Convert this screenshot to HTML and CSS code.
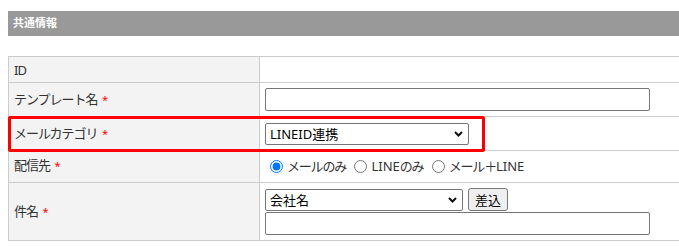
FILE: index.html
```html
<!DOCTYPE html>
<html>
<head>
    <meta charset="utf-8">
    <title>共通情報</title>
<link rel="stylesheet" href="styles.css">
</head>
<body>
    <div class="page">
        <h2 class="section-title">共通情報</h2>

        <div class="form-wrap">
            <table class="form-table">
                <tr class="row-id">
                    <th>ID</th>
                    <td></td>
                </tr>
                <tr class="row-template">
                    <th>テンプレート名 <span class="req">*</span></th>
                    <td><input type="text" class="text-wide"></td>
                </tr>
                <tr class="row-category">
                    <th>メールカテゴリ <span class="req">*</span></th>
                    <td>
                        <span class="select-box cat-select">
                            <select>
                                <option>LINEID連携</option>
                            </select>
                            <svg class="chevron" width="9" height="6" viewBox="0 0 9 6"><path d="M1 1 L4.5 4.5 L8 1" fill="none" stroke="#111" stroke-width="2"/></svg>
                        </span>
                    </td>
                </tr>
                <tr class="row-dest">
                    <th>配信先 <span class="req">*</span></th>
                    <td>
                        <label class="radio"><input type="radio" name="dest" checked><span class="jp">メールのみ</span></label>
                        <label class="radio"><input type="radio" name="dest">LINE<span class="jp">のみ</span></label>
                        <label class="radio"><input type="radio" name="dest"><span class="jp">メール＋</span>LINE</label>
                    </td>
                </tr>
                <tr class="row-subject">
                    <th>件名 <span class="req">*</span></th>
                    <td>
                        <div class="insert-line">
                            <span class="select-box field-select">
                                <select>
                                    <option>会社名</option>
                                </select>
                                <svg class="chevron" width="9" height="6" viewBox="0 0 9 6"><path d="M1 1 L4.5 4.5 L8 1" fill="none" stroke="#111" stroke-width="2"/></svg>
                            </span>
                            <button type="button" class="insert-btn">差込</button>
                        </div>
                        <input type="text" class="text-wide">
                    </td>
                </tr>
            </table>
            <div class="highlight"></div>
        </div>
    </div>
</body>
</html>
```

FILE: styles.css
```css
body {
  margin: 0;
  overflow: hidden;
  font-family: "Noto Sans", "Noto Sans CJK JP", sans-serif;
  font-size: 13px;
  color: #333333;
}

.page {
  padding: 11px 0 0 8px;
}

.section-title {
  margin: 0 0 20px 0;
  height: 25px;
  line-height: 24px;
  padding-left: 5px;
  background-color: #999999;
  color: #ffffff;
  font-size: 11px;
  font-weight: bold;
}

.form-wrap {
  position: relative;
  width: 672px;
}

.form-table {
  width: 672px;
  border-collapse: collapse;
  table-layout: fixed;
}

.form-table th,
.form-table td {
  border: 1px solid #cccccc;
  padding: 0 5px;
  line-height: 18px;
  vertical-align: middle;
}

.form-table th {
  width: 240px;
  text-align: left;
  font-weight: normal;
  letter-spacing: -1px;
  background-color: #f2f3f2;
}

.row-id th { height: 25px; }
.row-template th { height: 33px; }
.row-category th { height: 33px; }
.row-dest th { height: 29px; padding-bottom: 2px; }
.row-dest td { height: 29px; padding-bottom: 2px; }
.row-subject th { height: 57px; }

.req {
  color: #ff0000;
  font-size: 11px;
  margin-left: 2px;
}

input[type="text"] {
  box-sizing: border-box;
  height: 23px;
  border: 1px solid #767676;
  border-radius: 2px;
  font-family: inherit;
  font-size: 13px;
  padding: 0 4px;
  margin: 0;
  display: block;
}

.text-wide {
  width: 385px;
}

.select-box {
  position: relative;
  display: inline-block;
}

.select-box select {
  -webkit-appearance: none;
  appearance: none;
  box-sizing: border-box;
  height: 22px;
  border: 1px solid #767676;
  border-radius: 2px;
  background-color: #ffffff;
  color: #000000;
  font-family: inherit;
  font-size: 13px;
  padding: 0 4px;
  margin: 0;
  display: block;
}

.cat-select select { width: 204px; }
.field-select select { width: 198px; }

.chevron {
  position: absolute;
  right: 6px;
  top: 8px;
  pointer-events: none;
}

.radio {
  color: #333333;
}

.radio .jp {
  letter-spacing: -1.2px;
}

.radio input {
  margin: 3px 4px 0 5px;
  vertical-align: -2px;
}

.insert-line {
  display: flex;
  align-items: center;
  gap: 5px;
  margin-bottom: 1px;
}

.insert-btn {
  box-sizing: border-box;
  height: 23px;
  width: 40px;
  padding: 0;
  border: 1px solid #767676;
  border-radius: 3px;
  background-color: #efefef;
  color: #000000;
  font-family: inherit;
  font-size: 13px;
}

.highlight {
  position: absolute;
  left: 0;
  top: 60px;
  width: 477px;
  height: 36px;
  box-sizing: border-box;
  border: 3px solid #ff0000;
  border-radius: 2px;
  pointer-events: none;
}
```
